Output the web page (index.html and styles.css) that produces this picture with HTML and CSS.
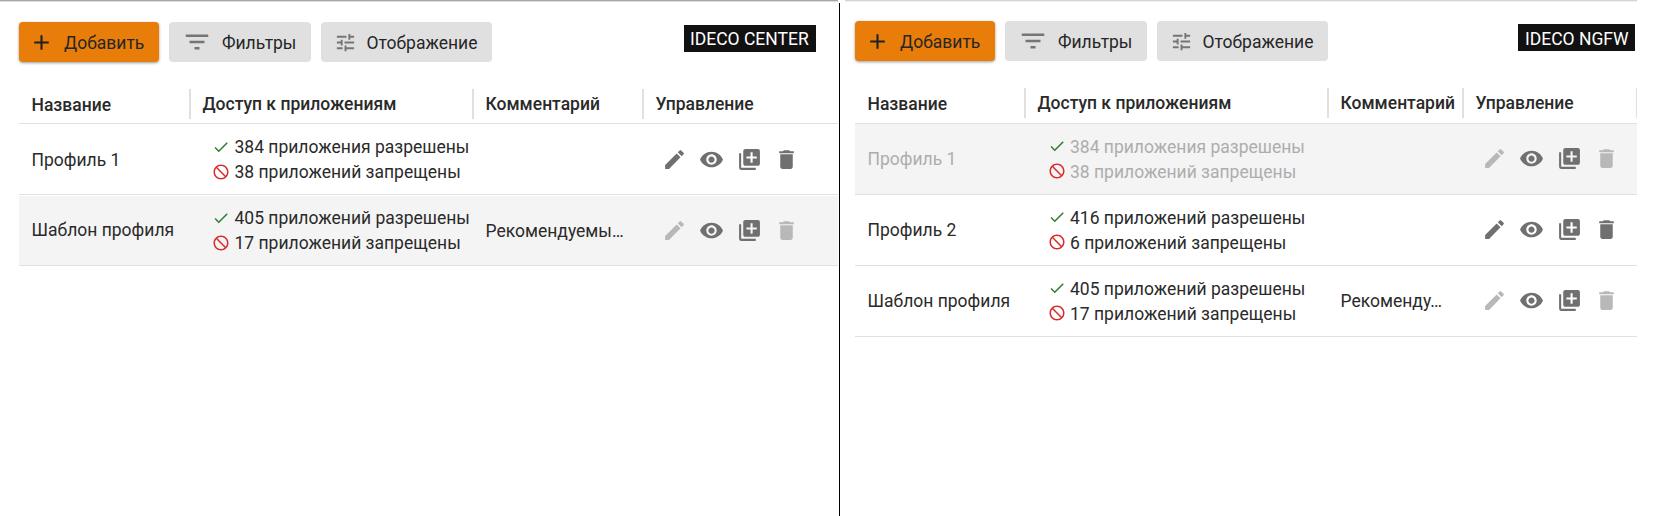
FILE: index.html
```html
<!DOCTYPE html>
<html lang="ru">
<head>
<meta charset="utf-8">
<title>Профили приложений</title>
<link rel="stylesheet" href="styles.css">
</head>
<body>
<svg class="sprite" aria-hidden="true">
  <symbol id="add" viewBox="0 0 24 24"><path d="M19 13h-6v6h-2v-6H5v-2h6V5h2v6h6v2z"/></symbol>
  <symbol id="filter" viewBox="0 0 24 24"><path d="M10 18h4v-2h-4v2zM3 6v2h18V6H3zm3 7h12v-2H6v2z"/></symbol>
  <symbol id="tune" viewBox="0 0 24 24"><path d="M3 17v2h6v-2H3zM3 5v2h10V5H3zm10 16v-2h8v-2h-8v-2h-2v6h2zM7 9v2H3v2h4v2h2V9H7zm14 4v-2H11v2h10zm-6-4h2V7h4V5h-4V3h-2v6z"/></symbol>
  <symbol id="edit" viewBox="0 0 24 24"><path d="M3 17.25V21h3.75L17.81 9.94l-3.75-3.75L3 17.25zM20.71 7.04a.996.996 0 0 0 0-1.41l-2.34-2.34a.996.996 0 0 0-1.41 0l-1.83 1.83 3.75 3.75 1.83-1.83z"/></symbol>
  <symbol id="view" viewBox="0 0 24 24"><path d="M12 4.5C7 4.5 2.73 7.61 1 12c1.73 4.39 6 7.5 11 7.5s9.27-3.11 11-7.5c-1.73-4.39-6-7.5-11-7.5zM12 17c-2.76 0-5-2.24-5-5s2.24-5 5-5 5 2.24 5 5-2.24 5-5 5zm0-8c-1.66 0-3 1.34-3 3s1.34 3 3 3 3-1.34 3-3-1.34-3-3-3z"/></symbol>
  <symbol id="copy" viewBox="0 0 24 24"><path d="M4 6H2v14c0 1.1.9 2 2 2h14v-2H4V6zm16-4H8c-1.1 0-2 .9-2 2v12c0 1.1.9 2 2 2h12c1.1 0 2-.9 2-2V4c0-1.1-.9-2-2-2zm-1 9h-4v4h-2v-4H9V9h4V5h2v4h4v2z"/></symbol>
  <symbol id="trash" viewBox="0 0 24 24"><path d="M6 19c0 1.1.9 2 2 2h8c1.1 0 2-.9 2-2V7H6v12zM19 4h-3.5l-1-1h-5l-1 1H5v2h14V4z"/></symbol>
  <symbol id="check" viewBox="0 0 24 24"><path d="M9 16.17L4.83 12l-1.42 1.41L9 19 21 7l-1.41-1.41z"/></symbol>
  <symbol id="block" viewBox="0 0 24 24"><path transform="matrix(-1 0 0 1 24 0)" d="M12 2C6.48 2 2 6.48 2 12s4.48 10 10 10 10-4.48 10-10S17.52 2 12 2zM4 12c0-4.42 3.58-8 8-8 1.85 0 3.55.63 4.9 1.69L5.69 16.9C4.63 15.55 4 13.85 4 12zm8 8c-1.85 0-3.55-.63-4.9-1.69L18.31 7.1C19.37 8.45 20 10.15 20 12c0 4.42-3.58 8-8 8z"/></symbol>
</svg>

<main class="compare">
  <section class="panel panel-center">
    <div class="toolbar">
      <button class="btn btn-primary"><svg class="ico-add"><use href="#add"/></svg><span>Добавить</span></button>
      <button class="btn btn-filter"><svg class="ico-filter"><use href="#filter"/></svg><span>Фильтры</span></button>
      <button class="btn btn-view"><svg class="ico-tune"><use href="#tune"/></svg><span>Отображение</span></button>
      <div class="product">IDECO CENTER</div>
    </div>
    <div class="table">
      <div class="row head">
        <div class="th first">Название</div><div class="th">Доступ к приложениям</div><div class="th">Комментарий</div><div class="th">Управление</div>
      </div>
      <div class="row">
        <div class="name low">Профиль 1</div>
        <div class="access">
          <div class="line"><svg class="ok"><use href="#check"/></svg><span>384 приложения разрешены</span></div>
          <div class="line"><svg class="no"><use href="#block"/></svg><span>38 приложений запрещены</span></div>
        </div>
        <div class="comment"></div>
        <div class="actions"><svg><use href="#edit"/></svg><svg><use href="#view"/></svg><svg><use href="#copy"/></svg><svg><use href="#trash"/></svg></div>
      </div>
      <div class="row shaded inset">
        <div class="name">Шаблон профиля</div>
        <div class="access">
          <div class="line"><svg class="ok"><use href="#check"/></svg><span>405 приложений разрешены</span></div>
          <div class="line"><svg class="no"><use href="#block"/></svg><span>17 приложений запрещены</span></div>
        </div>
        <div class="comment low">Рекомендуемы…</div>
        <div class="actions"><svg class="off"><use href="#edit"/></svg><svg><use href="#view"/></svg><svg><use href="#copy"/></svg><svg class="off"><use href="#trash"/></svg></div>
      </div>
    </div>
  </section>
  <div class="divider"></div>
  <section class="panel panel-ngfw">
    <div class="toolbar">
      <button class="btn btn-primary"><svg class="ico-add"><use href="#add"/></svg><span>Добавить</span></button>
      <button class="btn btn-filter"><svg class="ico-filter"><use href="#filter"/></svg><span>Фильтры</span></button>
      <button class="btn btn-view"><svg class="ico-tune"><use href="#tune"/></svg><span>Отображение</span></button>
      <div class="product">IDECO NGFW</div>
    </div>
    <div class="table">
      <div class="row head">
        <div class="th first">Название</div><div class="th">Доступ к приложениям</div><div class="th">Комментарий</div><div class="th last">Управление</div>
      </div>
      <div class="row shaded muted">
        <div class="name">Профиль 1</div>
        <div class="access">
          <div class="line"><svg class="ok"><use href="#check"/></svg><span>384 приложения разрешены</span></div>
          <div class="line"><svg class="no"><use href="#block"/></svg><span>38 приложений запрещены</span></div>
        </div>
        <div class="comment"></div>
        <div class="actions"><svg class="off"><use href="#edit"/></svg><svg><use href="#view"/></svg><svg><use href="#copy"/></svg><svg class="off"><use href="#trash"/></svg></div>
      </div>
      <div class="row">
        <div class="name">Профиль 2</div>
        <div class="access">
          <div class="line"><svg class="ok"><use href="#check"/></svg><span>416 приложений разрешены</span></div>
          <div class="line"><svg class="no"><use href="#block"/></svg><span>6 приложений запрещены</span></div>
        </div>
        <div class="comment"></div>
        <div class="actions"><svg><use href="#edit"/></svg><svg><use href="#view"/></svg><svg><use href="#copy"/></svg><svg><use href="#trash"/></svg></div>
      </div>
      <div class="row">
        <div class="name">Шаблон профиля</div>
        <div class="access">
          <div class="line"><svg class="ok"><use href="#check"/></svg><span>405 приложений разрешены</span></div>
          <div class="line"><svg class="no"><use href="#block"/></svg><span>17 приложений запрещены</span></div>
        </div>
        <div class="comment">Рекоменду…</div>
        <div class="actions"><svg class="off"><use href="#edit"/></svg><svg><use href="#view"/></svg><svg><use href="#copy"/></svg><svg class="off"><use href="#trash"/></svg></div>
      </div>
    </div>
  </section>
</main>
</body>
</html>
```
FILE: styles.css
```css
* { box-sizing: border-box; }

body {
  margin: 0;
  background: #fff;
  color: #2a2a2a;
  font: 400 17.5px/25px Roboto, sans-serif;
}

.sprite { display: none; }
svg { display: block; flex: none; fill: currentColor; }

.compare { display: flex; height: 516px; overflow: hidden; }

.panel { border-top: 1px solid #a5a5a5; box-shadow: inset 0 1px #dedede; }
.panel-center { width: 838px; padding: 21px 0 0 19px; }
.panel-ngfw { width: 792px; margin-left: 5px; padding: 20px 0 0 10px; border-top-color: #d4d4d4; box-shadow: inset 0 1px #f3f3f3; }
.divider { width: 1px; margin: 3px 0 0 1px; background: #000; }

.toolbar { display: flex; gap: 10px; height: 40px; }
.btn {
  display: flex;
  align-items: center;
  height: 40px;
  padding: 0;
  border: 0;
  border-radius: 4px;
  background: #e0e0e0;
  color: #262626;
  font: inherit;
  white-space: nowrap;
}
.btn span { padding-top: 2px; }
.btn svg { color: #757575; }
.btn-primary { width: 140px; padding-left: 10px; gap: 10px; background: #e87d09; box-shadow: 0 1px 3px rgba(0, 0, 0, .4); }
.btn-primary svg { color: #212121; }
.btn-filter { width: 142px; padding-left: 13px; gap: 10px; }
.btn-view { width: 171px; padding-left: 13px; gap: 9.5px; }
.ico-add { width: 25px; height: 25px; margin-top: 1px; }
.ico-filter { width: 30px; height: 30px; }
.ico-tune { width: 23px; height: 23px; margin-top: 1px; }

.product {
  height: 27px;
  margin: 3px 0 0 auto;
  background: #111;
  color: #fff;
  line-height: 29px;
  white-space: nowrap;
}
.panel-center .product { width: 132px; margin-right: 22px; padding-left: 6px; }
.panel-ngfw .product { width: 117px; margin-right: 2px; padding-left: 7px; line-height: 31px; }

.row { display: grid; height: 71px; border-bottom: 1px solid #e0e0e0; }
.panel-center .row { grid-template-columns: 170px 283px 170px 196px; }
.panel-ngfw .row { grid-template-columns: 169px 303px 135px 175px; }
.row.head { height: 62px; align-items: end; font-weight: 500; }
.panel-ngfw .row.head { height: 63px; }
.th { height: 30px; margin-bottom: 4px; padding-left: 11.5px; border-left: 2px solid #e0e0e0; line-height: 30px; white-space: nowrap; }
.panel-ngfw .th { margin-bottom: 5px; }
.th.first { border-left: 0; padding: 1px 0 0 12.5px; }
.th.last { border-right: 1px solid #e0e0e0; }

.name, .comment { display: flex; align-items: center; white-space: nowrap; }
.name { padding-left: 12.5px; }
.comment { padding-left: 13.5px; }
.low { padding-top: 2px; }
.access { padding: 10px 0 0 23px; }
.line { display: flex; align-items: center; gap: 4.5px; height: 25px; white-space: nowrap; }
.line span { padding-top: 2px; }
.line svg { width: 18px; height: 18px; }
.panel-ngfw .access { padding-left: 23.5px; }
.panel-ngfw .line svg { margin-bottom: 2px; }
.ok { color: #2e7d32; }
.no { color: #d92b2b; }
.actions { display: flex; gap: 12px; padding: 23px 0 0 20px; color: #707070; }
.panel-ngfw .actions { padding-top: 22px; }
.actions svg { width: 25px; height: 25px; }
.actions svg:nth-child(3) { margin-left: 1px; }
.actions .off { color: #b8b8b8; }

.shaded { background: #f4f4f4; }
.inset { box-shadow: inset 0 1px #fff; }
.muted .name, .muted .line span { color: #adadad; }
```
